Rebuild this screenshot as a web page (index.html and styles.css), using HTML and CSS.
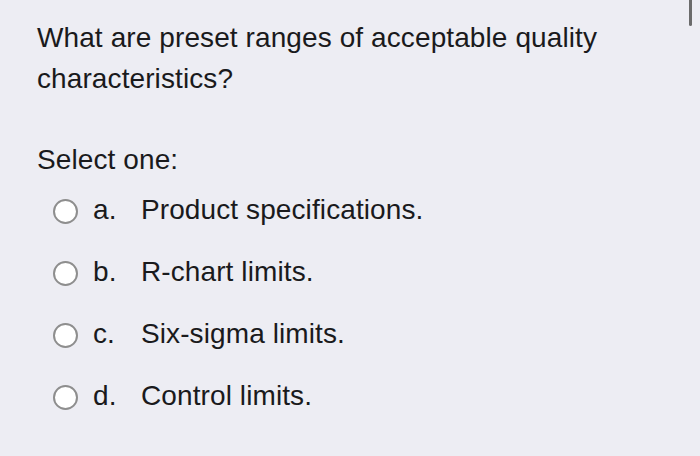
FILE: index.html
```html
<!DOCTYPE html>
<html>
<head>
<meta charset="utf-8">
<link rel="stylesheet" href="styles.css">
</head>
<body>
<div class="page">
  <div class="question">What are preset ranges of acceptable quality characteristics?</div>
  <div class="prompt">Select one:</div>
  <div class="answers">
    <div class="option"><span class="radio"></span><span class="letter">a.</span><span class="label">Product specifications.</span></div>
    <div class="option"><span class="radio"></span><span class="letter">b.</span><span class="label">R-chart limits.</span></div>
    <div class="option"><span class="radio"></span><span class="letter">c.</span><span class="label">Six-sigma limits.</span></div>
    <div class="option"><span class="radio"></span><span class="letter">d.</span><span class="label">Control limits.</span></div>
  </div>
</div>
<div class="scroll-indicator"></div>
</body>
</html>
```
FILE: styles.css
```css
html, body {
  margin: 0;
  padding: 0;
  background: #ededf3;
}
body {
  font-family: "Liberation Sans", Arial, sans-serif;
  color: #1a1a1c;
  width: 700px;
  height: 456px;
  overflow: hidden;
  position: relative;
  letter-spacing: 0.1px;
}
.page {
  padding: 17px 0 0 37px;
}
.question {
  font-size: 28px;
  line-height: 41px;
  width: 620px;
}
.prompt {
  font-size: 28px;
  line-height: 42px;
  margin-top: 40px;
}
.answers {
  display: flex;
  flex-direction: column;
  gap: 20px;
  margin-top: 8px;
}
.option {
  display: flex;
  align-items: center;
  height: 42px;
  font-size: 28px;
}
.radio {
  width: 21px;
  height: 21px;
  border: 2px solid #8e8e8e;
  border-radius: 50%;
  background: #fff;
  margin: 3px 15px 0 16px;
  flex: none;
}
.letter {
  width: 48px;
}
.scroll-indicator {
  position: absolute;
  right: 8px;
  top: 0;
  width: 3px;
  height: 26px;
  background: #6b6b6b;
  border-radius: 0 0 2px 2px;
}
```
